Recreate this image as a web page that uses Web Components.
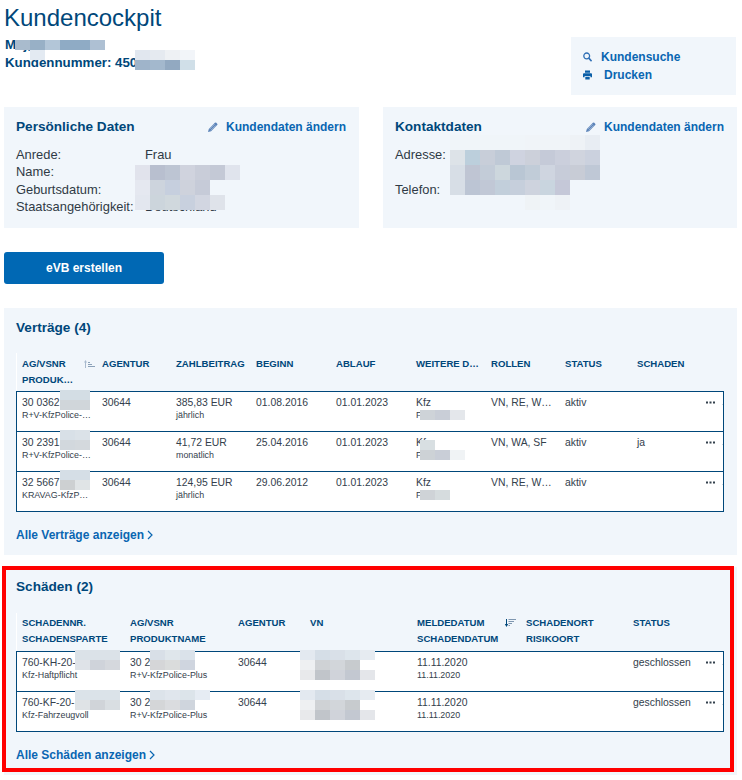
<!DOCTYPE html>
<html lang="de"><head><meta charset="utf-8"/><title>Kundencockpit</title><style>
  body {
    margin: 0;
    background: #fff;
    font-family: "Liberation Sans", Arial, sans-serif;
  }
</style><script>
function define(name, markup, extra = {}) {
  const template = document.createElement('template');
  template.innerHTML = markup;
  customElements.define(name, class extends HTMLElement {
    constructor() {
      super();
      this.attachShadow({mode: 'open'}).appendChild(template.content.cloneNode(true));
    }
    connectedCallback() {
      if (extra.connected) extra.connected.call(this);
    }
  });
}

define('cockpit-page', `<style>
  :host { display: block; position: relative; width: 733px; padding: 4px 5px 5px 4px; color: #2f3a45; }
</style><slot></slot>`);

define('page-head', `<style>
  :host { display: flex; justify-content: space-between; align-items: flex-start; height: 103px; }
  ::slotted(h1) { margin: 0 0 4px; font-size: 24px; line-height: 28px; font-weight: normal; color: #00477a; }
  ::slotted(p) { margin: 0 0 0 1px; font-size: 13.3px; line-height: 18px; font-weight: bold; color: #00477a; }
</style><div><slot></slot></div><slot name="aside"></slot>`);

define('action-box', `<style>
  :host { display: block; box-sizing: border-box; width: 165px; height: 58px; margin: 33px 1px 0 0; padding: 11px 12px; background: #f1f6fb; }
</style><slot></slot>`);

define('action-link', `<style>
  :host { display: flex; align-items: center; height: 18px; font-size: 12px; font-weight: bold; color: #0a66b2; }
  ::slotted(svg) { flex: none; margin-right: var(--icon-gap, 9px); }
</style><slot name="icon"></slot><slot></slot>`);

define('card-row', `<style>
  :host { display: grid; grid-template-columns: 355px 354px; column-gap: 24px; }
</style><slot></slot>`);

define('info-card', `<style>
  :host { display: block; box-sizing: border-box; height: 121px; padding: 10px 13px 0 12px; background: #f1f6fb; }
  header { display: flex; justify-content: space-between; align-items: center; height: 20px; margin-bottom: 9px; }
  h2 { margin: 0; font-size: 13.6px; line-height: 20px; color: #00477a; }
  dl { margin: 0; }
</style><header><h2 id="title"></h2><slot name="action"></slot></header><dl><slot></slot></dl>`, {
  connected() { this.shadowRoot.getElementById('title').textContent = this.getAttribute('heading'); }
});

define('key-value', `<style>
  :host { display: grid; grid-template-columns: var(--key-width, 129px) 1fr; font-size: 12.9px; line-height: 17.4px; }
  :host([tall]) { height: 34.8px; }
</style><slot name="key"></slot><slot></slot>`);

define('evb-button', `<style>
  :host { display: flex; align-items: center; justify-content: center; width: 160px; height: 32px; margin-top: 24px; border-radius: 3px; background: #0068b4; color: #fff; font-size: 12px; font-weight: bold; }
</style><slot></slot>`);

define('data-section', `<style>
  :host { display: block; position: relative; margin-top: var(--gap, 24px); padding: 10px 13px 10px 12px; background: #f1f6fb; }
  h2 { margin: 0 0 var(--title-gap, 15px); font-size: 13.6px; line-height: 20px; color: #00477a; }
  #frame { display: none; position: absolute; inset: -1px 3px 3px -2px; border: 4px solid #f00; pointer-events: none; }
  :host([marked]) #frame { display: block; }
  ::slotted(a) { display: flex; align-items: center; gap: 3px; margin-top: 13px; height: 20px; font-size: 12px; font-weight: bold; color: #0a66b2; text-decoration: none; }
</style><h2 id="title"></h2><slot></slot><div id="frame"></div>`, {
  connected() { this.shadowRoot.getElementById('title').textContent = this.getAttribute('heading'); }
});

define('data-table', `<style>
  :host { display: block; }
  #rows { border: 1px solid #00477a; border-bottom: 0; background: #fff; }
</style><slot name="head"></slot><div id="rows"><slot></slot></div>`, {
  connected() { this.style.setProperty('--cols', this.getAttribute('cols')); }
});

define('head-row', `<style>
  :host { display: grid; grid-template-columns: var(--cols); box-sizing: border-box; height: 38px; padding: var(--head-pad, 2px) 0 0 5px; border-left: 1px solid #fff; }
</style><slot></slot>`);

define('head-cell', `<style>
  :host { display: block; font-size: 9.6px; line-height: 16px; font-weight: bold; color: #00477a; white-space: nowrap; }
  div { display: flex; align-items: center; }
  ::slotted(span) { display: block; }
</style><div><slot></slot><slot name="icon"></slot></div><slot name="sub"></slot>`);

define('sort-icon', `<style>
  :host { display: block; margin-left: auto; height: 8px; line-height: 0; }
  .asc, .desc { display: none; }
  :host([dir-name="asc"]) .asc, :host([dir-name="desc"]) .desc { display: block; }
</style><svg class="asc" width="12" height="8" viewBox="0 0 12 8"><path d="M2.5 1.5V8" stroke="#a9bace" fill="none"/><path d="M1 2.6L2.5 0 4 2.6z" fill="#a9bace"/><path d="M5 2.5h2M5 4.5h4M5 6.5h7" stroke="#8ba1b8" fill="none"/></svg><svg class="desc" width="12" height="8" viewBox="0 0 12 8"><path d="M2.5 0v6" stroke="#00477a" fill="none"/><path d="M.8 5h3.4L2.5 8z" fill="#00477a"/><path d="M4.5 .5H12M4.5 2.5H10M4.5 4.5H8M4.5 6.5H6" stroke="#7f97b0" fill="none"/></svg>`);

define('data-row', `<style>
  :host { display: grid; grid-template-columns: var(--cols); box-sizing: border-box; height: 40px; padding: 4px 0 0 5px; border-bottom: 1px solid #00477a; }
</style><slot></slot>`);

define('data-cell', `<style>
  :host { display: block; font-size: 10.4px; line-height: 13px; color: #33404c; white-space: nowrap; }
  ::slotted(small) { display: block; font-size: 8.9px; line-height: 12px; }
</style><slot></slot><slot name="sub"></slot>`);

define('more-dots', `<style>
  :host { display: block; line-height: 0; }
</style><svg width="18" height="13" viewBox="0 0 18 13"><path d="M0 6.5h2M3.5 6.5h2M7 6.5h2" stroke="#33404c" stroke-width="2" fill="none"/><rect x="16" y="8" width="1" height="1" fill="#cfd6dd"/></svg>`);

// pixelated cover over redacted values, cells="a,b|c,d" with '-' for a gap
define('blur-patch', `<style>
  :host { display: grid; position: absolute; grid-auto-rows: var(--h); grid-auto-columns: var(--w); }
  i { display: block; }
</style>`, {
  connected() {
    const cw = +(this.getAttribute('w') || 15), ch = +(this.getAttribute('h') || 15);
    this.style.cssText = `left:${this.getAttribute('x')}px;top:${this.getAttribute('y')}px;--w:${cw}px;--h:${ch}px`;
    this.getAttribute('cells').split('|').forEach((row, r) => {
      row.split(',').forEach((colour, c) => {
        if (colour === '-') return;
        const cell = document.createElement('i');
        cell.style.cssText = `grid-row:${r + 1};grid-column:${c + 1};background:#${colour}`;
        this.shadowRoot.appendChild(cell);
      });
    });
  }
});
</script></head><body>
<cockpit-page>
  <page-head>
    <h1>Kundencockpit</h1>
    <p>Maj,</p>
    <p>Kundennummer: 450</p>
    <action-box slot="aside">
      <action-link>
        <svg slot="icon" width="9" height="10" viewBox="0 0 9 10"><circle cx="3.7" cy="3.9" r="2.9" fill="none" stroke="#2f6fb5" stroke-width="1.3"/><path d="M5.8 6.1L8.6 9.2" stroke="#2f6fb5" stroke-width="1.6" fill="none"/></svg>
        Kundensuche
      </action-link>
      <action-link style="--icon-gap:12px">
        <svg slot="icon" width="9" height="10" viewBox="0 0 9 10"><path fill="#0a5fa8" d="M2 .5h5v2.2H2zM.9 3.2h7.2c.5 0 .9.4.9.9v3.2H7.4V6H1.6v1.3H0V4.1c0-.5.4-.9.9-.9zM2.3 6.8h4.4v2.7H2.3z"/></svg>
        Drucken
      </action-link>
    </action-box>
  </page-head>

  <card-row>
    <info-card heading="Persönliche Daten">
      <action-link slot="action" style="--icon-gap:8px">
        <svg slot="icon" width="10" height="10" viewBox="0 0 10 10"><path fill="#5a82b8" d="M0 10l.8-3.1L6.9.8a1 1 0 0 1 1.4 0l.9.9a1 1 0 0 1 0 1.4L3.1 9.2z"/><path d="M1.6 7.2l5-5M2.8 8.4l5-5" stroke="#dfe8f3" stroke-width=".5" fill="none"/></svg>
        Kundendaten ändern
      </action-link>
      <key-value><span slot="key">Anrede:</span>Frau</key-value>
      <key-value><span slot="key">Name:</span></key-value>
      <key-value><span slot="key">Geburtsdatum:</span></key-value>
      <key-value><span slot="key">Staatsangehörigkeit:</span>Deutschland</key-value>
    </info-card>
    <info-card heading="Kontaktdaten">
      <action-link slot="action" style="--icon-gap:8px">
        <svg slot="icon" width="10" height="10" viewBox="0 0 10 10"><path fill="#5a82b8" d="M0 10l.8-3.1L6.9.8a1 1 0 0 1 1.4 0l.9.9a1 1 0 0 1 0 1.4L3.1 9.2z"/><path d="M1.6 7.2l5-5M2.8 8.4l5-5" stroke="#dfe8f3" stroke-width=".5" fill="none"/></svg>
        Kundendaten ändern
      </action-link>
      <key-value tall style="--key-width:55px"><span slot="key">Adresse:</span></key-value>
      <key-value style="--key-width:55px"><span slot="key">Telefon:</span></key-value>
    </info-card>
  </card-row>

  <evb-button>eVB erstellen</evb-button>

  <data-section heading="Verträge (4)" style="--head-pad:3px">
    <data-table cols="80px 74px 80px 80px 80px 75px 74px 72px 69px 18px">
      <head-row slot="head">
        <head-cell>AG/VSNR<sort-icon slot="icon" dir-name="asc" style="margin-right:7px"></sort-icon><span slot="sub">PRODUK…</span></head-cell>
        <head-cell>AGENTUR</head-cell>
        <head-cell>ZAHLBEITRAG</head-cell>
        <head-cell>BEGINN</head-cell>
        <head-cell>ABLAUF</head-cell>
        <head-cell>WEITERE D…</head-cell>
        <head-cell>ROLLEN</head-cell>
        <head-cell>STATUS</head-cell>
        <head-cell>SCHADEN</head-cell>
      </head-row>
      <data-row>
        <data-cell>30 0362<small slot="sub">R+V-KfzPolice-…</small></data-cell>
        <data-cell>30644</data-cell>
        <data-cell>385,83 EUR<small slot="sub">jährlich</small></data-cell>
        <data-cell>01.08.2016</data-cell>
        <data-cell>01.01.2023</data-cell>
        <data-cell>Kfz<small slot="sub">F</small></data-cell>
        <data-cell>VN, RE, W…</data-cell>
        <data-cell>aktiv</data-cell>
        <data-cell></data-cell>
        <more-dots></more-dots>
      </data-row>
      <data-row>
        <data-cell>30 2391<small slot="sub">R+V-KfzPolice-…</small></data-cell>
        <data-cell>30644</data-cell>
        <data-cell>41,72 EUR<small slot="sub">monatlich</small></data-cell>
        <data-cell>25.04.2016</data-cell>
        <data-cell>01.01.2023</data-cell>
        <data-cell>Kfz<small slot="sub">F</small></data-cell>
        <data-cell>VN, WA, SF</data-cell>
        <data-cell>aktiv</data-cell>
        <data-cell>ja</data-cell>
        <more-dots></more-dots>
      </data-row>
      <data-row>
        <data-cell>32 5667<small slot="sub">KRAVAG-KfzP…</small></data-cell>
        <data-cell>30644</data-cell>
        <data-cell>124,95 EUR<small slot="sub">jährlich</small></data-cell>
        <data-cell>29.06.2012</data-cell>
        <data-cell>01.01.2023</data-cell>
        <data-cell>Kfz<small slot="sub">F</small></data-cell>
        <data-cell>VN, RE, W…</data-cell>
        <data-cell>aktiv</data-cell>
        <data-cell></data-cell>
        <more-dots></more-dots>
      </data-row>
    </data-table>
    <a href="#">Alle Verträge anzeigen<svg width="6" height="10" viewBox="0 0 6 10"><path d="M1 1l4 4-4 4" fill="none" stroke="#0a66b2" stroke-width="1.2"/></svg></a>
  </data-section>

  <data-section heading="Schäden (2)" marked style="--gap:12px;--title-gap:16px">
    <data-table cols="108px 108px 72px 107px 109px 107px 73px 18px">
      <head-row slot="head">
        <head-cell>SCHADENNR.<span slot="sub">SCHADENSPARTE</span></head-cell>
        <head-cell>AG/VSNR<span slot="sub">PRODUKTNAME</span></head-cell>
        <head-cell>AGENTUR</head-cell>
        <head-cell>VN</head-cell>
        <head-cell>MELDEDATUM<sort-icon slot="icon" dir-name="desc" style="margin-right:10px"></sort-icon><span slot="sub">SCHADENDATUM</span></head-cell>
        <head-cell>SCHADENORT<span slot="sub">RISIKOORT</span></head-cell>
        <head-cell>STATUS</head-cell>
      </head-row>
      <data-row>
        <data-cell>760-KH-20-<small slot="sub">Kfz-Haftpflicht</small></data-cell>
        <data-cell>30 2<small slot="sub">R+V-KfzPolice-Plus</small></data-cell>
        <data-cell>30644</data-cell>
        <data-cell></data-cell>
        <data-cell>11.11.2020<small slot="sub">11.11.2020</small></data-cell>
        <data-cell></data-cell>
        <data-cell>geschlossen</data-cell>
        <more-dots></more-dots>
      </data-row>
      <data-row>
        <data-cell>760-KF-20-<small slot="sub">Kfz-Fahrzeugvoll</small></data-cell>
        <data-cell>30 2<small slot="sub">R+V-KfzPolice-Plus</small></data-cell>
        <data-cell>30644</data-cell>
        <data-cell></data-cell>
        <data-cell>11.11.2020<small slot="sub">11.11.2020</small></data-cell>
        <data-cell></data-cell>
        <data-cell>geschlossen</data-cell>
        <more-dots></more-dots>
      </data-row>
    </data-table>
    <a href="#">Alle Schäden anzeigen<svg width="6" height="10" viewBox="0 0 6 10"><path d="M1 1l4 4-4 4" fill="none" stroke="#0a66b2" stroke-width="1.2"/></svg></a>
  </data-section>

  <blur-patch x="15" y="40" h="10" cells="a9bbcd,98b0c6,b3c6d8,8fabc5,8fabc5,aec0d3"></blur-patch>
  <blur-patch x="30" y="50" h="10" cells="e3eaf2"></blur-patch>
  <blur-patch x="135" y="50" h="10" cells="e1e7ef,e5eaf0,eef1f4,f2f5f9|9fb4ca,a3b8cd,92a9c1,d0dfe8"></blur-patch>
  <blur-patch x="135" y="165" cells="e1e3ec,b8bfcf,bdc5d3,d0d3de,c9cdd9,c4c9d6,e0e4ed|e5e8f0,cdd4dd,c6cfde,ced2dc,c6cbd8|e3e7ef,ccd5dc,d0d8dd,c8d0de,d2d6e1,dfe3ea"></blur-patch>
  <blur-patch x="450" y="135" cells="f0f5f9,f0f5f9,f0f5f9,f0f5f9,f0f5f9,f0f4f8,f0f4f8,f0f4f8,eef2f6,e8edf3|dde3e8,bccfdc,c8ced9,bfc9d6,cfd3e0,ccd0da,c5cad8,cbcfdc,d0d4de,cbd1de|d7dee6,bfc5d3,c3ccd8,cdd7dd,b9c6d4,c1ccd8,cfd5e0,c7ccd9,c8ccd6,bfc8d6|d7dee6,bcc5d4,c1c8d6,c2cfdb,c6cfdc,ced3de,c9d5df,c5c8d8|-,-,-,-,-,eff3f6,f0f5f9,eef2f6"></blur-patch>

  <blur-patch x="60" y="390" h="10" cells="d3dde4,d3dde4|d0d6da,d0d6da"></blur-patch>
  <blur-patch x="60" y="430" h="10" cells="d8e0e7,dbe2e8|d2d8dd,d4d9dd"></blur-patch>
  <blur-patch x="60" y="470" h="10" cells="d5dee6,d5dee6|cdd0d2,e0e4e6"></blur-patch>
  <blur-patch x="420" y="410" h="10" cells="ced3d8,c9ced7,e4e7eb"></blur-patch>
  <blur-patch x="420" y="440" h="10" cells="d8dfe2|cdd2d6,c9ced7,f0f3f5"></blur-patch>
  <blur-patch x="420" y="490" h="10" cells="cfd3d7,d6dcde"></blur-patch>

  <blur-patch x="75" y="650" h="10" cells="dbe2e8,dbe2e8,dbe2e8|dfe3e8,cfd3da,d5d8dd"></blur-patch>
  <blur-patch x="75" y="690" h="10" cells="dbe3e9,dbe3e9,dbe3e9|dfe3e6,d0d4d9,d9dee2"></blur-patch>
  <blur-patch x="150" y="650" h="10" cells="d8dfe7,dfe6eb,dae2ea|d5d6d8,dadcdc,cfd5df"></blur-patch>
  <blur-patch x="150" y="690" h="10" cells="dce3ea,e0e6ed,dce4ea,e6ecf3|d4d6d8,dadcdf,cfd5dd"></blur-patch>
  <blur-patch x="300" y="650" h="10" cells="e3e9f0,d5dee7,d9e0e8,dde5ec,e6ebf1|eef0f2,cfd2d5,d2d6da,c7cbce,-|e8e9eb,c1c5ca,d0d3da,c3c8d1,e4e6ea"></blur-patch>
  <blur-patch x="300" y="690" h="10" cells="e3e9f0,d5dee7,d9e0e8,dde5ec,e6ebf1|eef0f2,cfd2d5,d2d6da,c7cbce,-|e8e9eb,c1c5ca,d0d3da,c3c8d1,e4e6ea"></blur-patch>
</cockpit-page>
</body></html>
